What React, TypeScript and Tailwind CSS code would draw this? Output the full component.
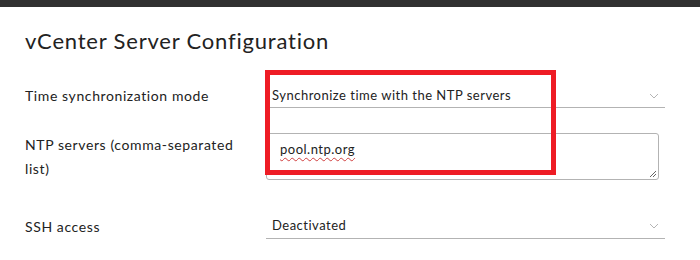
import React from "react";

const Chevron = () => (
  <svg width="10" height="6" viewBox="0 0 10 6" className="shrink-0">
    <path d="M1 1 L5 5 L9 1" fill="none" stroke="#b5b5b5" strokeWidth="1" />
  </svg>
);

export default function App() {
  return (
    <div
      className="relative w-[700px] h-[260px] bg-white overflow-hidden text-[#333]"
      style={{ fontFamily: "Lato, 'Open Sans', sans-serif" }}
    >
      <div className="h-[7px] bg-[#313131]" />
      <div className="pl-[25px] pr-[35px]">
        <h1 className="mt-[20px] text-[22px] leading-[28px] font-normal text-[#222] tracking-[0.8px]">
          vCenter Server Configuration
        </h1>
        <div className="mt-[29px] flex items-end">
          <div className="w-[241px] text-[14px] leading-[24px] text-[#222] h-[24px] self-center tracking-[0.6px]">
            Time synchronization mode
          </div>
          <div className="flex-1 h-[24px] border-b border-[#b3b3b3] flex items-center justify-between pl-[6px] pr-[6px]">
            <span className="text-[13px] text-[#222] tracking-[0.5px]">Synchronize time with the NTP servers</span>
            <Chevron />
          </div>
        </div>
        <div className="mt-[25px] flex items-start">
          <div className="w-[241px] pr-[14px] text-[14px] leading-[24px] text-[#222] tracking-[0.6px]">
            NTP servers (comma-separated list)
          </div>
          <div className="w-[393px] h-[47px] border border-[#b3b3b3] rounded-[3px] relative px-[13px] pt-[2px]">
            <span className="text-[13px] text-[#222] tracking-[0.5px] underline decoration-wavy decoration-[#d04040] decoration-[1px] underline-offset-[3px]">
              pool.ntp.org
            </span>
            <svg className="absolute right-[1px] bottom-[1px]" width="8" height="8" viewBox="0 0 8 8">
              <path d="M7 1 L1 7 M7 4 L4 7" stroke="#666" strokeWidth="1" />
            </svg>
          </div>
        </div>
        <div className="mt-[33px] flex items-center">
          <div className="w-[241px] text-[14px] leading-[24px] text-[#222] tracking-[0.6px]">SSH access</div>
          <div className="flex-1 h-[25px] border-b border-[#b3b3b3] flex items-center justify-between pl-[6px] pr-[6px]">
            <span className="text-[13px] text-[#222] tracking-[0.5px]">Deactivated</span>
            <Chevron />
          </div>
        </div>
      </div>
      <div className="absolute left-[265px] top-[70px] w-[291px] h-[105px] border-[5px] border-[#ee1c25]" />
    </div>
  );
}
